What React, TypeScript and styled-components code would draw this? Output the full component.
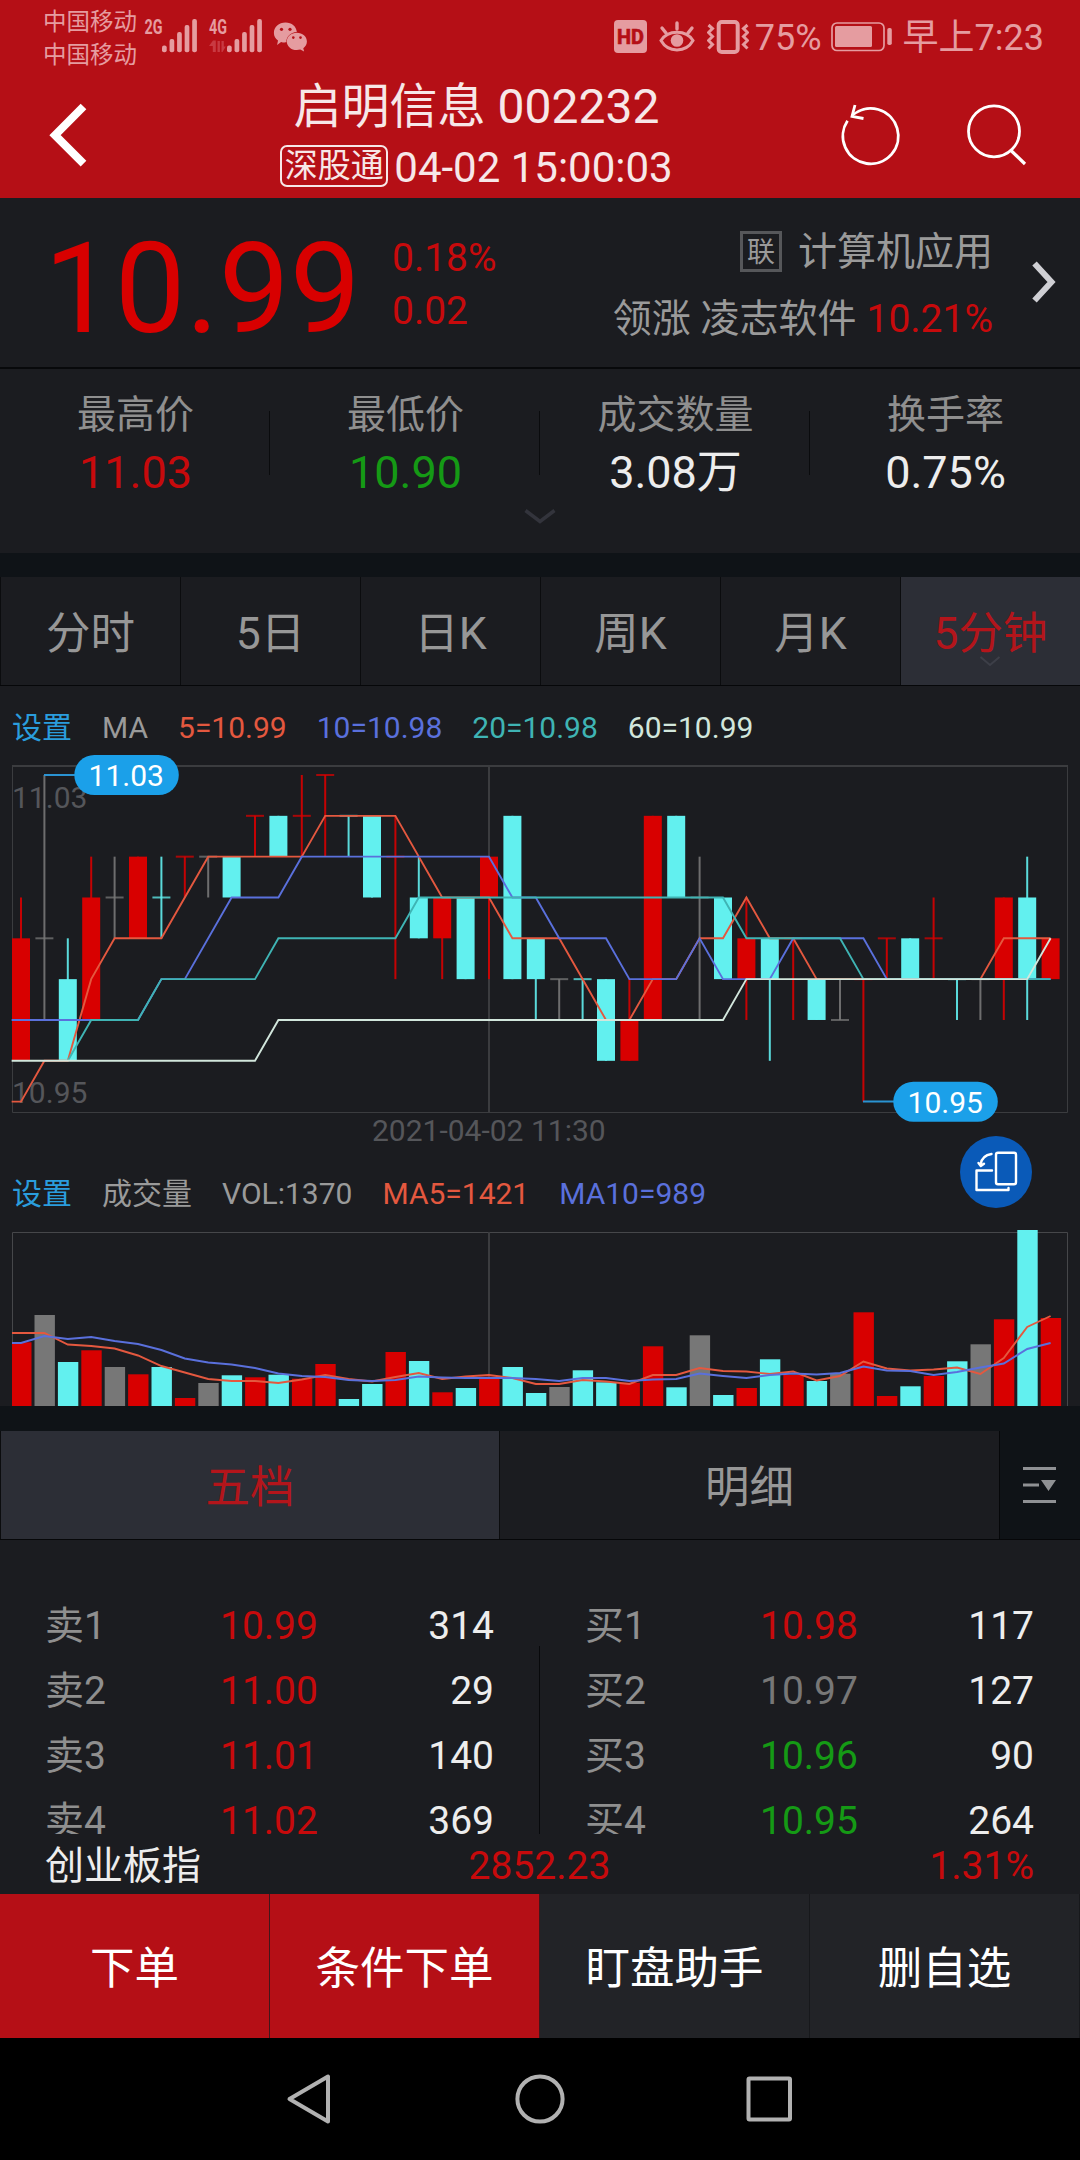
import React from 'react';
import styled, { createGlobalStyle } from 'styled-components';

const RED = '#b50f16';
const UP = '#d80000';
const CYAN = '#62f0ef';
const GRAY = '#777777';
const PANEL = '#1b1c20';
const GUTTER = '#0f1317';
const FONT = 'Roboto, "Noto Sans CJK SC", sans-serif';

const GlobalStyle = createGlobalStyle`
  * { box-sizing: border-box; }
  body { margin: 0; background: #000; font-family: ${FONT}; }
`;

const Screen = styled.div`
  display: flex;
  flex-direction: column;
  width: 1080px;
  height: 2160px;
  overflow: hidden;
  background: ${PANEL};
  white-space: nowrap;
`;

/* ---------- status bar and title ---------- */

const TopArea = styled.header`
  display: flex;
  flex-direction: column;
  height: 198px;
  flex: none;
  background: ${RED};
`;

const StatusBar = styled.div`
  display: flex;
  justify-content: space-between;
  height: 76px;
  padding: 0 36px 0 43px;
  color: #e59ca0;
`;

const StatusLeft = styled.div`
  display: flex;
  align-items: flex-start;
`;

const Carriers = styled.div`
  display: flex;
  flex-direction: column;
  padding-top: 6px;
  width: 101px;
  font-size: 23.5px;
  line-height: 33px;
`;

const StatusRight = styled.div`
  display: flex;
  align-items: flex-start;
  padding-top: 20px;
`;

const StatusText = styled.span<{ $gap: number }>`
  margin-left: ${(p) => p.$gap}px;
  font-size: 36px;
  line-height: 37px;
`;

const TitleBar = styled.div`
  display: grid;
  grid-template-columns: 270px 413px 397px;
  height: 122px;
`;

const BackSlot = styled.div`
  padding: 24px 0 0 43px;
`;

const Actions = styled.div`
  display: flex;
  gap: 63px;
  padding: 24px 0 0 155px;
`;

const TitleBlock = styled.div`
  display: flex;
  flex-direction: column;
  align-items: center;
  color: #f7e7e8;
`;

const StockName = styled.div`
  margin-top: 3px;
  font-size: 48px;
  line-height: 56px;
`;

const StockTime = styled.div`
  display: flex;
  align-items: center;
  gap: 6px;
  margin-top: 8px;
  font-size: 42px;
  line-height: 50px;
`;

const Connect = styled.span`
  width: 108px;
  height: 42px;
  margin-top: -4px;
  border: 2px solid #f7e7e8;
  border-radius: 7px;
  font-size: 33px;
  line-height: 38px;
  text-align: center;
`;

/* ---------- quote ---------- */

const Quote = styled.section`
  display: flex;
  height: 171px;
  flex: none;
  border-bottom: 2px solid #08090b;
`;

const Price = styled.div`
  width: 348px;
  margin-left: 44px;
  padding-top: 17px;
  font-size: 126px;
  line-height: 148px;
  color: ${UP};
`;

const Change = styled.div`
  display: flex;
  flex-direction: column;
  padding-top: 34px;
  font-size: 39px;
  line-height: 53px;
  color: #c70a0c;
`;

const Sector = styled.div`
  flex: 1;
  display: flex;
  flex-direction: column;
  align-items: flex-end;
  padding-top: 20px;
  font-size: 39px;
  color: #9a9a9a;
`;

const SectorLine = styled.div`
  display: flex;
  align-items: center;
  height: 67px;
  line-height: 66px;
`;

const LinkTag = styled.span`
  width: 42px;
  height: 41px;
  margin-right: 16px;
  border: 3px solid #56575a;
  font-size: 28px;
  line-height: 37px;
  text-align: center;
`;

const Rise = styled.span`
  margin-left: 10px;
  color: #c70a0c;
`;

const MoreSlot = styled.div`
  width: 87px;
  padding: 62px 0 0 38px;
`;

const Stats = styled.section`
  display: flex;
  flex-direction: column;
  align-items: center;
  height: 184px;
  flex: none;
`;

const StatGrid = styled.div`
  display: grid;
  grid-template-columns: repeat(4, 270px);
  align-items: start;
  height: 138px;
  padding-top: 18px;
`;

const Stat = styled.div`
  display: flex;
  flex-direction: column;
  align-items: center;
  height: 120px;
  padding-left: 1px;
  background: linear-gradient(#0a0b0d, #0a0b0d) right 24px / 1px 64px no-repeat;
  &:last-child { background: none; }
`;

const StatLabel = styled.span`
  font-size: 39px;
  line-height: 57px;
  color: #8f8f8f;
`;

const StatValue = styled.span<{ $color: string }>`
  font-size: 45px;
  line-height: 57px;
  color: ${(p) => p.$color};
`;

/* ---------- tabs ---------- */

const Gutter = styled.div<{ $h: number }>`
  height: ${(p) => p.$h}px;
  flex: none;
  background: ${GUTTER};
`;

const Tabs = styled.nav<{ $cols: string }>`
  display: grid;
  grid-template-columns: ${(p) => p.$cols};
  grid-template-rows: 108px;
  height: 109px;
  flex: none;
  border-bottom: 1px solid #060709;
  background: ${GUTTER};
`;

const Tab = styled.div<{ $on?: boolean }>`
  position: relative;
  padding-top: 6px;
  border-left: 1px solid #0b0c0e;
  font-size: 44.5px;
  line-height: 102px;
  text-align: center;
  color: ${(p) => (p.$on ? '#b3151b' : '#979797')};
  background: ${(p) => (p.$on ? '#2c2e36' : PANEL)};
`;

const TabCaret = styled.svg`
  position: absolute;
  left: 78px;
  top: 77px;
`;

const MenuSlot = styled.div`
  padding: 35px 0 0 22px;
  border-left: 1px solid #060709;
`;

/* ---------- charts ---------- */

const ChartArea = styled.section`
  position: relative;
  height: 720px;
  flex: none;
  display: flex;
  flex-direction: column;
`;

const Legend = styled.div<{ $h: number; $top: number }>`
  display: flex;
  gap: 30px;
  height: ${(p) => p.$h}px;
  padding: ${(p) => p.$top}px 0 0 12px;
  font-size: 30px;
  line-height: 36px;
`;

const Ink = styled.span<{ $color: string }>`
  color: ${(p) => p.$color};
`;

const Plot = styled.svg`
  display: block;
  flex: none;
  font-family: ${FONT};
`;

const RotateButton = styled.button`
  position: absolute;
  left: 960px;
  top: 450px;
  width: 72px;
  height: 72px;
  padding: 0;
  border: 0;
  border-radius: 50%;
  background: #0a5ab8;
`;

/* ---------- order book ---------- */

const Book = styled.section`
  display: grid;
  grid-template-columns: 540px 540px;
  height: 294px;
  flex: none;
  padding-top: 54px;
  overflow: hidden;
`;

const BookSide = styled.div`
  background: linear-gradient(#08090b, #08090b) right 52px / 1px 200px no-repeat;
  &:last-child { background: none; }
`;

const BookRow = styled.div`
  display: grid;
  grid-template-columns: 175px 150px 1fr;
  height: 65px;
  padding: 0 46px 0 45px;
  font-size: 39px;
  line-height: 65px;
`;

const Side = styled.span`
  color: #8f8f8f;
`;

const BookPrice = styled.span<{ $color: string }>`
  color: ${(p) => p.$color};
`;

const Volume = styled.span`
  text-align: right;
  color: #ededed;
`;

const IndexRow = styled.div`
  display: grid;
  grid-template-columns: 1fr 1fr 1fr;
  height: 60px;
  flex: none;
  padding: 0 46px 0 45px;
  font-size: 39px;
  line-height: 65px;
  color: #c70a0c;
`;

const IndexCell = styled.span<{ $align: string; $color?: string }>`
  text-align: ${(p) => p.$align};
  color: ${(p) => p.$color || 'inherit'};
`;

/* ---------- bottom ---------- */

const ActionBar = styled.div`
  display: grid;
  grid-template-columns: repeat(4, 270px);
  height: 144px;
  flex: none;
`;

const ActionButton = styled.button<{ $bg: string; $line: string }>`
  padding: 6px 0 0;
  border: 0;
  border-right: 1px solid ${(p) => p.$line};
  background: ${(p) => p.$bg};
  color: #fff;
  font-family: ${FONT};
  font-size: 44.5px;
  line-height: 138px;
`;

const SystemNav = styled.footer`
  display: flex;
  height: 122px;
  flex: none;
  background: #000;
`;

/* ---------- data ---------- */

type Kind = 'r' | 'c' | 'g';
const COLORS: Record<Kind, string> = { r: UP, c: CYAN, g: GRAY };

// kind, open/close levels and high/low levels in ticks below 11.03, volume bar top
const CANDLES: [Kind, number, number, number, number, number][] = [
  ['r', 4, 7, 3, 7, 1342.3], ['g', 4, 4, 0, 6, 1315], ['c', 5, 7, 4, 7, 1362],
  ['r', 3, 6, 2, 6, 1350.3], ['g', 3, 3, 2, 4, 1367], ['r', 2, 4, 2, 4, 1374.3],
  ['c', 3, 3, 2, 4, 1367], ['r', 2, 2, 2, 3, 1398], ['g', 2, 2, 2, 3, 1383],
  ['c', 2, 3, 2, 3, 1375.3], ['r', 1, 1, 1, 2, 1377.3], ['c', 1, 2, 1, 2, 1374.7],
  ['r', 1, 1, 0, 2, 1378.7], ['r', 0, 0, 0, 2, 1364], ['c', 1, 1, 1, 2, 1399],
  ['c', 1, 3, 1, 3, 1384], ['r', 2, 2, 1, 5, 1352], ['c', 3, 4, 2, 4, 1361],
  ['r', 3, 4, 3, 5, 1392.3], ['c', 3, 5, 3, 5, 1388], ['r', 2, 3, 2, 5, 1376.7],
  ['c', 1, 5, 1, 5, 1367], ['c', 4, 5, 4, 6, 1393], ['g', 5, 5, 5, 6, 1387],
  ['c', 5, 5, 5, 6, 1370.3], ['c', 5, 7, 5, 7, 1382.3], ['r', 6, 7, 5, 7, 1382.7],
  ['r', 1, 6, 1, 6, 1346.3], ['c', 1, 3, 1, 3, 1387.3], ['g', 3, 3, 2, 6, 1335.3],
  ['c', 3, 5, 3, 5, 1395], ['r', 4, 5, 3, 6, 1388], ['c', 4, 5, 4, 7, 1359.3],
  ['r', 4, 4, 4, 6, 1375], ['c', 5, 6, 5, 6, 1381], ['g', 6, 6, 5, 6, 1373.7],
  ['r', 5, 5, 5, 8, 1312.3], ['r', 4, 4, 4, 5, 1396], ['c', 4, 5, 4, 5, 1386.3],
  ['r', 4, 4, 3, 5, 1376], ['c', 5, 5, 5, 6, 1361.3], ['g', 5, 5, 5, 6, 1344.3],
  ['r', 3, 5, 3, 6, 1319.3], ['c', 3, 5, 2, 6, 1230], ['r', 4, 5, 4, 5, 1318],
];

const MA_LINES: [string, [number, number][]][] = [
  ['#e4583f', [[-0.4, 8], [0, 8], [1, 7], [2, 7], [3, 5], [4, 4], [6, 4], [8, 2], [12, 2], [13, 1], [16, 1], [18, 3], [20, 3], [21, 4], [23, 4], [25, 6], [26, 6], [27, 5], [28, 5], [29, 4], [30, 4], [31, 3], [32, 4], [33, 4], [34, 5], [41, 5], [42, 4], [44, 4]]],
  ['#5a70dc', [[-0.4, 6], [5, 6], [6, 5], [7, 5], [9, 3], [11, 3], [12, 2], [20, 2], [21, 3], [22, 3], [23, 4], [25, 4], [26, 5], [28, 5], [29, 4], [30, 5], [32, 5], [33, 4], [36, 4], [37, 5], [44, 5]]],
  ['#3fb4b4', [[2, 7], [3, 6], [5, 6], [6, 5], [10, 5], [11, 4], [16, 4], [17, 3], [30, 3], [31, 4], [35, 4], [36, 5], [44, 5]]],
  ['#d2e6dc', [[-0.4, 7], [10, 7], [11, 6], [30, 6], [31, 5], [43, 5], [44, 4]]],
];

const VOL_MA5 = [1333, 1333, 1344.5, 1346, 1348.5, 1355.5, 1366, 1372.5, 1379, 1381, 1381, 1383, 1379.5, 1375, 1379, 1381.5, 1377, 1373, 1379, 1376.5, 1375, 1378, 1384, 1384, 1380, 1381.5, 1384, 1375, 1375, 1368, 1371, 1371.5, 1374, 1371.5, 1380.5, 1376, 1361.5, 1368.5, 1370.5, 1369.5, 1367.5, 1374, 1358, 1327, 1316];
const VOL_MA10 = [1343, 1336, 1339, 1337, 1341, 1344, 1350, 1358.5, 1362.5, 1364.5, 1368, 1373.5, 1376, 1377, 1380, 1381, 1380, 1376.5, 1377.5, 1378, 1378, 1378, 1379, 1381, 1378, 1378, 1381, 1379.5, 1379, 1373.5, 1376, 1378, 1375, 1373.5, 1374.5, 1373, 1366.5, 1370.5, 1371, 1375, 1372, 1367.5, 1363.5, 1349, 1343];

const SELLS = [['卖1', '10.99', '314'], ['卖2', '11.00', '29'], ['卖3', '11.01', '140'], ['卖4', '11.02', '369']];
const BUYS = [['买1', '10.98', '117'], ['买2', '10.97', '127'], ['买3', '10.96', '90'], ['买4', '10.95', '264']];

const priceColor = (p: string) => {
  const n = Number(p);
  return n > 10.97 ? '#c70a0c' : n < 10.97 ? '#159a15' : '#777777';
};

const cx = (i: number) => 21 + 23.4 * i;
const ly = (level: number) => 775 + 40.83 * level;

/* ---------- parts ---------- */

const SignalIcons = () => (
  <svg width="170" height="60" viewBox="144 0 170 60" fill="currentColor" fontFamily={FONT}>
    {[['2G', 144.5, 162], ['4G', 209, 227]].map(([label, tx, bx]) => (
      <g key={label as string}>
        <text x={tx} y="34" fontSize="21" fontWeight="700" textLength="18" lengthAdjust="spacingAndGlyphs">{label}</text>
        {[45.5, 39, 32, 25, 19].map((top, i) => (
          <rect key={top} x={(bx as number) + i * 7.55} y={top} width="4.7" height={52.3 - top} rx="2" />
        ))}
      </g>
    ))}
    <g fill="#c83a42">
      <path d="M209 46l4-5.500h2.800v11.500h-3v-6zM217.500 41h2.400v11h-2.400zM221.500 41h2.300v5.500h2l-3.300 5.500h-1z" />
    </g>
    <path d="M285.500 22.600c6.400 0 10.900 4.100 11.300 9.300-6.200.4-10.800 4.600-10.400 10.400-2 .2-3.600.1-5.300-.4l-4 3 .9-4.300c-2.600-2-4.100-4.400-4.100-7.600 0-5.800 5-10.400 11.600-10.400z" />
    <path d="M296.800 32.800c5.700 0 10.100 3.900 10.100 8.700 0 2.900-1.300 5-3.600 6.700l.8 3.300-3.800-1.900c-1.100.3-2.300.5-3.500.5-5.700 0-10-3.800-10-8.600s4.300-8.700 10-8.700z" />
    <g fill={RED}>
      <circle cx="281.500" cy="29.300" r="1.600" /><circle cx="290" cy="29.300" r="1.600" />
      <circle cx="293.300" cy="37.600" r="1.300" /><circle cx="300.500" cy="37.600" r="1.300" />
    </g>
  </svg>
);

const HdIcon = () => (
  <svg width="33" height="34" viewBox="0 0 33 34" fontFamily={FONT}>
    <rect width="33" height="33" rx="4" fill="currentColor" />
    <text x="3" y="24" fontSize="21" fontWeight="800" fill={RED} stroke={RED} strokeWidth=".5" textLength="27" lengthAdjust="spacingAndGlyphs">HD</text>
  </svg>
);

const Spaced = styled.svg<{ $gap: number }>`
  margin-left: ${(p) => p.$gap}px;
`;

const EyeIcon = () => (
  <Spaced $gap={12} width="36" height="34" viewBox="0 0 36 34" fill="none" stroke="currentColor" strokeWidth="3.400" strokeLinecap="round">
    <path d="M2 20.500C9 9.500 27 9.500 34 20.500 27 33 9 33 2 20.500z" strokeWidth="3" />
    <circle cx="18" cy="20.500" r="6.300" fill="currentColor" stroke="none" />
    <path d="M18 3v6M3 8l4 5M33 8l-4 5" />
  </Spaced>
);

const VibrateIcon = () => (
  <Spaced $gap={12} width="42" height="34" viewBox="0 0 42 34" fill="none" stroke="currentColor">
    <rect x="11.700" y="2" width="19" height="30" rx="3" strokeWidth="4" />
    <path d="M1.500 5l4 3.500-4 4 4 4-4 4 4 4-4 4M40.500 5l-4 3.500 4 4-4 4 4 4-4 4 4 4" strokeWidth="3" />
  </Spaced>
);

const BatteryIcon = () => (
  <Spaced $gap={9} width="62" height="34" viewBox="0 0 62 34">
    <rect x="1" y="3" width="52" height="27.500" rx="5" fill="none" stroke="currentColor" strokeWidth="1.700" />
    <rect x="4" y="6" width="37" height="21" rx="1.500" fill="currentColor" />
    <rect x="56.300" y="8" width="4.500" height="17" rx="1.800" fill="currentColor" />
  </Spaced>
);

const PriceTag = ({ x, y, label }: { x: number; y: number; label: string }) => (
  <g>
    <rect x={x} y={y} width="104.500" height="40" rx="20" fill="#1ba0e9" />
    <text x={x + 52} y={y + 31} fontSize="30" textAnchor="middle" fill="#fff">{label}</text>
  </g>
);

const CandlePlot = () => (
  <Plot width="1080" height="400" viewBox="0 750 1080 400">
    <g fill="none" stroke="#3b3c3f">
      <path d="M12 766H1068" strokeWidth="2" />
      <path d="M12.500 766V1112.500H1067.500V766" />
      <path d="M489 766V1112" strokeWidth="2" />
    </g>
    {CANDLES.map(([k, top, bottom, high, low], i) => (
      <g key={i} fill={COLORS[k]}>
        <rect x={cx(i) - 1} y={ly(high)} width="2" height={ly(low) - ly(high)} opacity=".9" />
        {top === bottom
          ? <rect x={cx(i) - 9} y={ly(top) - 1} width="18" height="2" opacity=".75" />
          : <rect x={cx(i) - 9} y={ly(top)} width="18" height={ly(bottom) - ly(top)} />}
      </g>
    ))}
    <g fontSize="30" fill="#55565a">
      <text x="12" y="808">11.03</text>
      <text x="12" y="1103">10.95</text>
      <text x="372" y="1141">2021-04-02 11:30</text>
    </g>
    {MA_LINES.map(([color, pts]) => (
      <polyline key={color} points={pts.map(([i, l]) => `${cx(i)},${ly(l)}`).join(' ')} fill="none" stroke={color} strokeWidth="1.900" />
    ))}
    <path d="M44 775H76M863 1101.500H895" stroke="#2a93d2" strokeWidth="2" />
    <PriceTag x={74.3} y={755} label="11.03" />
    <PriceTag x={893.3} y={1081.7} label="10.95" />
  </Plot>
);

const VolumePlot = () => {
  const line = (ys: number[]) => `12,${ys[0]} ` + ys.map((y, i) => `${cx(i)},${y}`).join(' ');
  return (
    <Plot width="1080" height="178" viewBox="0 1228 1080 178">
      <path d="M12.500 1406V1232.500H1067.500V1406" fill="none" stroke="#46474a" />
      <path d="M489 1232V1406" stroke="#3b3c3f" strokeWidth="2" />
      {CANDLES.map(([k, , , , , top], i) => {
        const x = Math.max(12, cx(i) + 0.3 - 10.2);
        return <rect key={i} x={x} y={top} width={cx(i) + 10.5 - x} height={1406 - top} fill={COLORS[k]} />;
      })}
      <polyline points={line(VOL_MA5)} fill="none" stroke="#e4583f" strokeWidth="1.900" />
      <polyline points={line(VOL_MA10)} fill="none" stroke="#5a70dc" strokeWidth="1.900" />
    </Plot>
  );
};

const BookColumn = ({ rows }: { rows: string[][] }) => (
  <BookSide>
    {rows.map(([side, price, volume]) => (
      <BookRow key={side}>
        <Side>{side}</Side>
        <BookPrice $color={priceColor(price)}>{price}</BookPrice>
        <Volume>{volume}</Volume>
      </BookRow>
    ))}
  </BookSide>
);

export default function App() {
  return (
    <>
      <GlobalStyle />
      <Screen>
        <TopArea>
          <StatusBar>
            <StatusLeft>
              <Carriers>
                <span>中国移动</span>
                <span>中国移动</span>
              </Carriers>
              <SignalIcons />
            </StatusLeft>
            <StatusRight>
              <HdIcon />
              <EyeIcon />
              <VibrateIcon />
              <StatusText $gap={6}>75%</StatusText>
              <BatteryIcon />
              <StatusText $gap={10}>早上7:23</StatusText>
            </StatusRight>
          </StatusBar>
          <TitleBar>
            <BackSlot>
              <svg width="46" height="72" viewBox="43 100 46 72" fill="none" stroke="#fff" strokeWidth="8">
                <path d="M83.500 106.500L55 135.200l28.500 28.500" />
              </svg>
            </BackSlot>
            <TitleBlock>
              <StockName>启明信息 002232</StockName>
              <StockTime>
                <Connect>深股通</Connect>
                04-02 15:00:03
              </StockTime>
            </TitleBlock>
            <Actions>
              <svg width="65" height="72" viewBox="838 100 65 72" fill="none" stroke="#fff" strokeWidth="2.800">
                <path d="M852.300 115.300A27.700 27.700 0 1 1 847.500 120.800" />
                <path d="M855 105l-3 11.500 11.500 2" />
              </svg>
              <svg width="65" height="72" viewBox="966 100 65 72" fill="none" stroke="#fff" strokeWidth="2.800">
                <circle cx="994" cy="131.300" r="25.500" />
                <path d="M1011 150.500l14 13.500" strokeWidth="3.200" />
              </svg>
            </Actions>
          </TitleBar>
        </TopArea>

        <Quote>
          <Price>10.99</Price>
          <Change>
            <span>0.18%</span>
            <span>0.02</span>
          </Change>
          <Sector>
            <SectorLine><LinkTag>联</LinkTag>计算机应用</SectorLine>
            <SectorLine>领涨 凌志软件<Rise>10.21%</Rise></SectorLine>
          </Sector>
          <MoreSlot>
            <svg width="30" height="44" viewBox="0 0 30 44" fill="none" stroke="#cfcfd4" strokeWidth="6">
              <path d="M3.500 3.500L20.500 22 3.500 40.500" />
            </svg>
          </MoreSlot>
        </Quote>

        <Stats>
          <StatGrid>
            <Stat><StatLabel>最高价</StatLabel><StatValue $color="#c70a0c">11.03</StatValue></Stat>
            <Stat><StatLabel>最低价</StatLabel><StatValue $color="#159a15">10.90</StatValue></Stat>
            <Stat><StatLabel>成交数量</StatLabel><StatValue $color="#ededed">3.08万</StatValue></Stat>
            <Stat><StatLabel>换手率</StatLabel><StatValue $color="#ededed">0.75%</StatValue></Stat>
          </StatGrid>
          <svg width="34" height="20" viewBox="0 0 34 20" fill="none" stroke="#33343c" strokeWidth="3.500">
            <path d="M2.500 3.500L17 14.500 31.500 3.500" />
          </svg>
        </Stats>

        <Gutter $h={24} />
        <Tabs $cols="repeat(6, 180px)">
          <Tab>分时</Tab>
          <Tab>5日</Tab>
          <Tab>日K</Tab>
          <Tab>周K</Tab>
          <Tab>月K</Tab>
          <Tab $on>
            5分钟
            <TabCaret width="22" height="14" viewBox="0 0 22 14" fill="none" stroke="#3d3f48" strokeWidth="2">
              <path d="M1.500 3L11 11 20.500 3" />
            </TabCaret>
          </Tab>
        </Tabs>

        <ChartArea>
          <Legend $h={64} $top={24}>
            <Ink $color="#2a9ddd">设置</Ink>
            <Ink $color="#9a9a9a">MA</Ink>
            <Ink $color="#e4583f">5=10.99</Ink>
            <Ink $color="#5a70dc">10=10.98</Ink>
            <Ink $color="#3fb4b4">20=10.98</Ink>
            <Ink $color="#d2e6dc">60=10.99</Ink>
          </Legend>
          <CandlePlot />
          <Legend $h={78} $top={26}>
            <Ink $color="#2a9ddd">设置</Ink>
            <Ink $color="#9a9a9a">成交量</Ink>
            <Ink $color="#9a9a9a">VOL:1370</Ink>
            <Ink $color="#e4583f">MA5=1421</Ink>
            <Ink $color="#5a70dc">MA10=989</Ink>
          </Legend>
          <VolumePlot />
          <RotateButton>
            <svg width="72" height="72" viewBox="960 1136 72 72" fill="none" stroke="#fff" strokeWidth="2.400" strokeLinejoin="round" strokeLinecap="round">
              <rect x="996" y="1152.700" width="20" height="31.500" rx="2" />
              <path d="M992 1170.500H976.500V1190H1008.500V1188" />
              <path d="M991.500 1154C985 1155 981.500 1159 980.800 1164M978.500 1163l2.300 3 3.200-2.300" />
            </svg>
          </RotateButton>
        </ChartArea>

        <Gutter $h={25} />
        <Tabs $cols="499px 500px 1fr">
          <Tab $on>五档</Tab>
          <Tab>明细</Tab>
          <MenuSlot>
            <svg width="36" height="38" viewBox="1022 1466 36 38" fill="#8f9194">
              <path d="M1023 1467h33v3h-33zM1023 1483.500h16v3h-16zM1023 1500h33v3h-33zM1041 1480h15l-7.500 11z" />
            </svg>
          </MenuSlot>
        </Tabs>

        <Book>
          <BookColumn rows={SELLS} />
          <BookColumn rows={BUYS} />
        </Book>
        <IndexRow>
          <IndexCell $align="left" $color="#ededed">创业板指</IndexCell>
          <IndexCell $align="center">2852.23</IndexCell>
          <IndexCell $align="right">1.31%</IndexCell>
        </IndexRow>

        <ActionBar>
          <ActionButton $bg={RED} $line="#42161b">下单</ActionButton>
          <ActionButton $bg={RED} $line="#42161b">条件下单</ActionButton>
          <ActionButton $bg="#222327" $line="#17181b">盯盘助手</ActionButton>
          <ActionButton $bg="#222327" $line="#17181b">删自选</ActionButton>
        </ActionBar>
        <SystemNav>
          <svg width="1080" height="122" viewBox="0 2038 1080 122" fill="none" stroke="#b1b1b1" strokeWidth="4" strokeLinejoin="round">
            <path d="M328 2076.500V2121.500L289.500 2099z" />
            <circle cx="540" cy="2099" r="22.600" />
            <rect x="748.500" y="2078.500" width="41.500" height="41" rx="1" />
          </svg>
        </SystemNav>
      </Screen>
    </>
  );
}
